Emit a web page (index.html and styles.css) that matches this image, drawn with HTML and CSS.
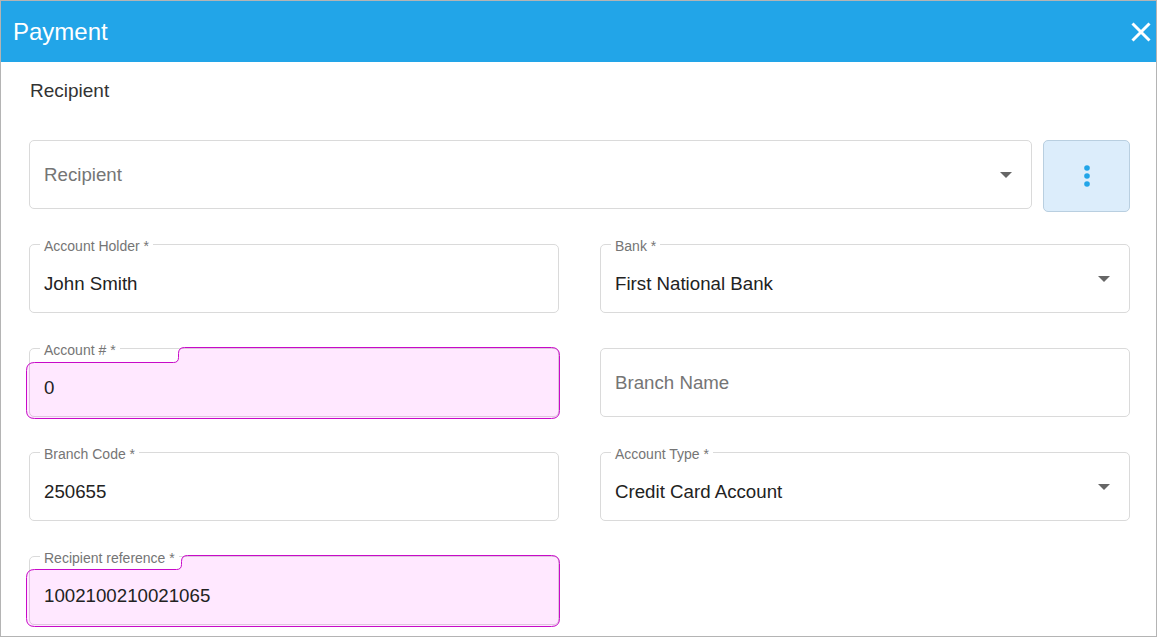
FILE: index.html
```html
<!DOCTYPE html>
<html lang="en">
<head>
    <meta charset="UTF-8">
    <title>Payment</title>
    <link rel="stylesheet" href="styles.css">
</head>
<body>
    <div class="dialog">
        <header class="dialog-header">
            <h1 class="dialog-title">Payment</h1>
            <button class="close-btn" aria-label="Close">
                <svg width="20" height="20" viewBox="0 0 20 20">
                    <path d="M1.5 1.5 L18.5 18.5 M18.5 1.5 L1.5 18.5" stroke="#fff" stroke-width="3" fill="none"/>
                </svg>
            </button>
        </header>

        <div class="dialog-body">
            <h2 class="section-title">Recipient</h2>

            <div class="recipient-row">
                <div class="field field-select field-wide">
                    <span class="placeholder">Recipient</span>
                    <span class="caret"></span>
                </div>
                <button class="more-btn" aria-label="More">
                    <svg width="6" height="22" viewBox="0 0 6 22">
                        <circle cx="3" cy="3" r="2.8" fill="#22a5e8"/>
                        <circle cx="3" cy="11" r="2.8" fill="#22a5e8"/>
                        <circle cx="3" cy="19" r="2.8" fill="#22a5e8"/>
                    </svg>
                </button>
            </div>

            <div class="form-grid">
                <div class="field">
                    <label class="field-label">Account Holder *</label>
                    <span class="value">John Smith</span>
                </div>
                <div class="field field-select">
                    <label class="field-label">Bank *</label>
                    <span class="value">First National Bank</span>
                    <span class="caret"></span>
                </div>

                <div class="field">
                    <svg class="autofill" width="534" height="72" viewBox="0 0 534 72">
                        <path d="M0.5 23.5 Q0.5 15.5 8.5 15.5 L147.5 15.5 Q152.5 15.5 152.5 10.5 L152.5 6.5 Q152.5 0.5 158.5 0.5 L525.5 0.5 Q533.5 0.5 533.5 8.5 L533.5 63.5 Q533.5 71.5 525.5 71.5 L8.5 71.5 Q0.5 71.5 0.5 63.5 Z"/>
                    </svg>
                    <label class="field-label">Account # *</label>
                    <span class="value">0</span>
                </div>
                <div class="field">
                    <span class="placeholder">Branch Name</span>
                </div>

                <div class="field">
                    <label class="field-label">Branch Code *</label>
                    <span class="value">250655</span>
                </div>
                <div class="field field-select">
                    <label class="field-label">Account Type *</label>
                    <span class="value">Credit Card Account</span>
                    <span class="caret"></span>
                </div>

                <div class="field">
                    <svg class="autofill" width="534" height="72" viewBox="0 0 534 72">
                        <path d="M0.5 22.5 Q0.5 14.5 8.5 14.5 L150.5 14.5 Q155.5 14.5 155.5 9.5 L155.5 6.5 Q155.5 0.5 161.5 0.5 L525.5 0.5 Q533.5 0.5 533.5 8.5 L533.5 63.5 Q533.5 71.5 525.5 71.5 L8.5 71.5 Q0.5 71.5 0.5 63.5 Z"/>
                    </svg>
                    <label class="field-label">Recipient reference *</label>
                    <span class="value">1002100210021065</span>
                </div>
            </div>
        </div>
    </div>
</body>
</html>
```

FILE: styles.css
```css
:root {
    --header-color: #22a5e8;
    --border-color: #dadada;
    --label-color: #757575;
    --text-color: #222;
}

* {
    margin: 0;
    padding: 0;
    box-sizing: border-box;
    font-family: 'Liberation Sans', Arial, sans-serif;
}

body {
    background: #fff;
}

.dialog {
    width: 1157px;
    height: 637px;
    border: 1px solid #b4b4b4;
    overflow: hidden;
}

.dialog-header {
    height: 61px;
    background-color: var(--header-color);
    display: flex;
    align-items: center;
    justify-content: space-between;
    padding: 0 5px 0 12px;
}

.dialog-title {
    color: #fff;
    font-size: 24px;
    font-weight: normal;
}

.close-btn {
    background: none;
    border: none;
    width: 20px;
    height: 20px;
    display: flex;
    cursor: pointer;
}

.dialog-body {
    padding: 18px 26px 0 28px;
}

.section-title {
    font-size: 19px;
    font-weight: normal;
    color: #333;
    line-height: 22px;
    margin-left: 1px;
    margin-bottom: 38px;
}

.recipient-row {
    display: flex;
    align-items: flex-start;
    gap: 11px;
}

.field-wide {
    flex: 1;
}

.more-btn {
    width: 87px;
    height: 72px;
    background-color: #dcedfb;
    border: 1px solid #b9cfe0;
    border-radius: 5px;
    display: flex;
    align-items: center;
    justify-content: center;
    cursor: pointer;
}

.form-grid {
    margin-top: 32px;
    display: grid;
    grid-template-columns: 530px 530px;
    column-gap: 41px;
    row-gap: 35px;
}

.field {
    position: relative;
    height: 69px;
    border: 1px solid var(--border-color);
    border-radius: 5px;
    display: flex;
    align-items: center;
    padding: 0 20px 0 14px;
    font-size: 18.7px;
}

.field-select {
    padding-right: 19px;
}

.field-label {
    position: absolute;
    top: -6px;
    left: 10px;
    padding: 0 4px;
    background: #fff;
    font-size: 14px;
    line-height: 15px;
    color: var(--label-color);
}

.value {
    position: relative;
    padding-top: 10px;
    color: var(--text-color);
}

.placeholder {
    color: var(--label-color);
}

.caret {
    margin-left: auto;
    width: 0;
    height: 0;
    border-left: 6px solid transparent;
    border-right: 6px solid transparent;
    border-top: 6px solid #666;
}

.autofill {
    position: absolute;
    left: -4px;
    top: -2px;
    pointer-events: none;
}

.autofill path {
    fill: rgba(250, 0, 250, 0.09);
    stroke: #c80ac8;
    stroke-width: 1;
}
```
